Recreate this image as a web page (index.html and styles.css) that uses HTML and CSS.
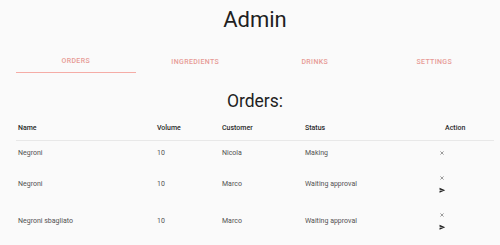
FILE: index.html
```html
<!DOCTYPE html>
<html lang="en">
<head>
  <meta charset="UTF-8" />
  <meta name="viewport" content="width=device-width, initial-scale=1.0" />
  <title>Admin</title>
  <link rel="stylesheet" href="styles.css">
</head>
<body>
  <div class="container">
    <h1 class="title">Admin</h1>

    <nav class="tabs">
      <div class="tab active">Orders</div>
      <div class="tab">Ingredients</div>
      <div class="tab">Drinks</div>
      <div class="tab">Settings</div>
    </nav>

    <h2 class="subtitle">Orders:</h2>

    <table class="orders">
      <colgroup>
        <col class="col-name" />
        <col class="col-volume" />
        <col class="col-customer" />
        <col class="col-status" />
        <col class="col-action" />
      </colgroup>
      <thead>
        <tr>
          <th>Name</th>
          <th>Volume</th>
          <th>Customer</th>
          <th>Status</th>
          <th class="action-head">Action</th>
        </tr>
      </thead>
      <tbody>
        <tr>
          <td>Negroni</td>
          <td>10</td>
          <td>Nicola</td>
          <td>Making</td>
          <td>
            <div class="actions">
              <button class="icon-btn" title="Cancel">
                <svg class="icon-close" viewBox="0 0 10 10"><path d="M1 1L9 9M9 1L1 9" /></svg>
              </button>
            </div>
          </td>
        </tr>
        <tr>
          <td>Negroni</td>
          <td>10</td>
          <td>Marco</td>
          <td>Waiting approval</td>
          <td>
            <div class="actions">
              <button class="icon-btn" title="Cancel">
                <svg class="icon-close" viewBox="0 0 10 10"><path d="M1 1L9 9M9 1L1 9" /></svg>
              </button>
              <button class="icon-btn" title="Approve">
                <svg class="icon-send" viewBox="0 0 24 24"><path d="M2.01 21L23 12 2.01 3 2 10l15 2-15 2z" /></svg>
              </button>
            </div>
          </td>
        </tr>
        <tr>
          <td>Negroni sbagliato</td>
          <td>10</td>
          <td>Marco</td>
          <td>Waiting approval</td>
          <td>
            <div class="actions">
              <button class="icon-btn" title="Cancel">
                <svg class="icon-close" viewBox="0 0 10 10"><path d="M1 1L9 9M9 1L1 9" /></svg>
              </button>
              <button class="icon-btn" title="Approve">
                <svg class="icon-send" viewBox="0 0 24 24"><path d="M2.01 21L23 12 2.01 3 2 10l15 2-15 2z" /></svg>
              </button>
            </div>
          </td>
        </tr>
      </tbody>
    </table>
  </div>
</body>
</html>
```

FILE: styles.css
```css
body {
  margin: 0;
  font-family: Roboto, "Liberation Sans", sans-serif;
  background: #fafafa;
  color: #222;
}

.container {
  width: 478px;
  margin-left: 16px;
}

.title {
  margin: 7px 0 0;
  font-size: 22px;
  font-weight: 400;
  line-height: 26px;
  text-align: center;
  color: #1f1f1f;
}

.tabs {
  display: flex;
  margin-top: 16px;
}

.tab {
  flex: 1;
  height: 24px;
  display: flex;
  align-items: center;
  justify-content: center;
  box-sizing: border-box;
  padding-top: 1px;
  font-size: 7px;
  font-weight: 500;
  letter-spacing: 0.35px;
  text-transform: uppercase;
  color: #e79a96;
}

.tab.active {
  border-bottom: 1.5px solid #f5aca6;
}

.subtitle {
  margin: 18px 0 0;
  font-size: 17.5px;
  font-weight: 400;
  line-height: 20px;
  text-align: center;
  color: #1f1f1f;
}

.orders {
  width: 478px;
  margin-top: 5px;
  border-collapse: collapse;
  table-layout: fixed;
  font-size: 7px;
}

.col-name { width: 139px; }
.col-volume { width: 65px; }
.col-customer { width: 83px; }
.col-status { width: 133px; }
.col-action { width: 58px; }

.orders th {
  height: 24px;
  padding: 0 2px;
  text-align: left;
  font-weight: 500;
  color: #2a2a2a;
  border-bottom: 1px solid #e8e8e8;
}

.orders th.action-head {
  padding-left: 9px;
}

.orders td {
  padding: 6px 2px;
  color: #525252;
  vertical-align: middle;
}

.actions {
  display: flex;
  flex-direction: column;
}

.icon-btn {
  height: 12.5px;
  width: 10px;
  padding: 0 0 0 1px;
  border: none;
  background: none;
  display: flex;
  align-items: center;
  cursor: pointer;
}

.icon-close {
  width: 4px;
  height: 4px;
  margin-left: 1px;
  stroke: #666;
  stroke-width: 1.6;
  fill: none;
}

.icon-send {
  width: 6.5px;
  height: 6.5px;
  fill: #222;
}
```
